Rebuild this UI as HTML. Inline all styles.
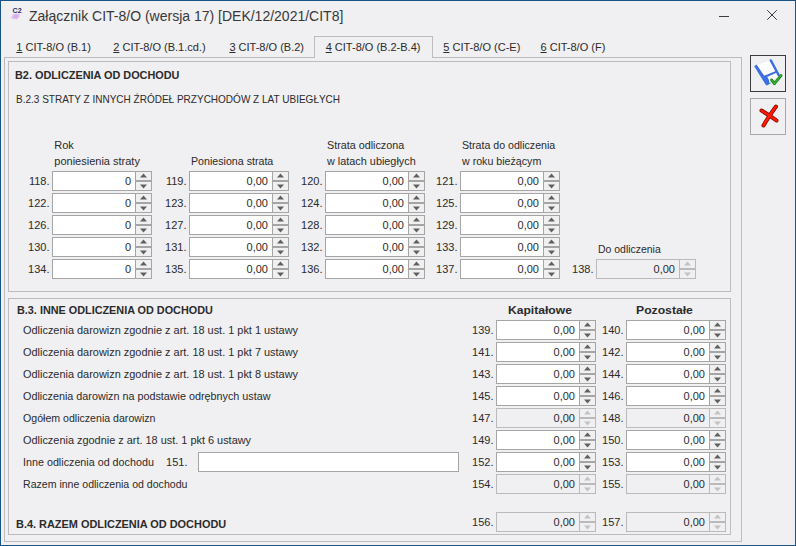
<!DOCTYPE html>
<html><head><meta charset="utf-8"><style>
html,body{margin:0;padding:0;}
body{width:796px;height:546px;position:relative;overflow:hidden;background:#f0eff1;font-family:"Liberation Sans", sans-serif;color:#2b2b2b;}
.t{position:absolute;white-space:pre;}
.r{position:absolute;box-sizing:border-box;}
u{text-decoration:underline;text-underline-offset:1px;}
</style></head><body>

<div class="r" style="left:0;top:0;width:796px;height:546px;border:1px solid #1a5486"></div>
<svg class="r" style="left:0px;top:0px" width="30" height="30" viewBox="0 0 30 30">
<text x="12.6" y="13" font-family="Liberation Sans" font-weight="bold" font-size="6.4" fill="#1e2f72" textLength="9" lengthAdjust="spacingAndGlyphs">C2</text>
<path d="M10.6 17.8 L13.4 13.8 L19.8 13.6 L19.6 16.6 L17.4 19.6 L12.6 19 Z" fill="#e4c8f0"/>
<path d="M12.4 17.6 L14.6 14.6 L18.6 14.4 L18.2 17.2 L16.6 18.6 Z" fill="#d8aee8"/>
</svg>
<div class="t" style="left:29.00px;top:8.35px;font-size:14px;line-height:16.8px;color:#383838;">Załącznik CIT-8/O (wersja 17) [DEK/12/2021/CIT8]</div>
<div class="r" style="left:719px;top:16px;width:10px;height:1px;background:#3c3c3c"></div>
<svg class="r" style="left:766px;top:9px" width="12" height="12"><path d="M1.2 1.2 L10.8 10.8 M10.8 1.2 L1.2 10.8" stroke="#3c3c3c" stroke-width="1"/></svg>
<div class="r" style="left:4px;top:57px;width:738px;height:485px;border:1px solid #bcbcbc;background:transparent;"></div>
<div class="r" style="left:314px;top:36px;width:119px;height:22px;border:1px solid #bcbcbc;border-bottom:none;background:#f0eff1"></div>
<div class="t" style="left:16.30px;top:40.59px;font-size:11px;line-height:13.2px;"><u>1</u> CIT-8/O (B.1)</div>
<div class="t" style="left:113.30px;top:40.59px;font-size:11px;line-height:13.2px;"><u>2</u> CIT-8/O (B.1.cd.)</div>
<div class="t" style="left:229.40px;top:40.59px;font-size:11px;line-height:13.2px;"><u>3</u> CIT-8/O (B.2)</div>
<div class="t" style="left:325.70px;top:40.59px;font-size:11px;line-height:13.2px;"><u>4</u> CIT-8/O (B.2-B.4)</div>
<div class="t" style="left:443.30px;top:40.59px;font-size:11px;line-height:13.2px;"><u>5</u> CIT-8/O (C-E)</div>
<div class="t" style="left:540.50px;top:40.59px;font-size:11px;line-height:13.2px;"><u>6</u> CIT-8/O (F)</div>
<div class="r" style="left:8px;top:61px;width:723px;height:231px;border:1px solid #bcbcbc;background:transparent;"></div>
<div class="r" style="left:8px;top:298px;width:723px;height:237px;border:1px solid #bcbcbc;background:transparent;"></div>
<div class="t" style="left:15.20px;top:69.19px;font-size:11px;line-height:13.2px;font-weight:bold;transform-origin:left center;transform:scaleX(0.988);">B2. ODLICZENIA OD DOCHODU</div>
<div class="t" style="left:16.30px;top:92.99px;font-size:11px;line-height:13.2px;transform-origin:left center;transform:scaleX(0.91);">B.2.3 STRATY Z INNYCH ŹRÓDEŁ PRZYCHODÓW Z LAT UBIEGŁYCH</div>
<div class="t" style="left:54.30px;top:139.19px;font-size:11px;line-height:13.2px;">Rok</div>
<div class="t" style="left:54.30px;top:154.69px;font-size:11px;line-height:13.2px;">poniesienia straty</div>
<div class="t" style="left:191.20px;top:154.69px;font-size:11px;line-height:13.2px;transform-origin:left center;transform:scaleX(0.968);">Poniesiona strata</div>
<div class="t" style="left:327.30px;top:139.19px;font-size:11px;line-height:13.2px;transform-origin:left center;transform:scaleX(0.978);">Strata odliczona</div>
<div class="t" style="left:327.30px;top:154.69px;font-size:11px;line-height:13.2px;transform-origin:left center;transform:scaleX(0.987);">w latach ubiegłych</div>
<div class="t" style="left:462.30px;top:139.19px;font-size:11px;line-height:13.2px;transform-origin:left center;transform:scaleX(0.965);">Strata do odliczenia</div>
<div class="t" style="left:462.30px;top:154.69px;font-size:11px;line-height:13.2px;transform-origin:left center;transform:scaleX(0.968);">w roku bieżącym</div>
<div class="t" style="right:746.50px;top:174.59px;font-size:11px;line-height:13.2px;">118.</div>
<div class="r" style="left:52px;top:171px;width:100px;height:20px;border:1px solid #a5a5a5;background:#ffffff;"></div>
<div class="r" style="left:135px;top:171px;width:17px;height:20px;border:1px solid #a5a5a5;background:#f0f0f0"></div>
<div class="r" style="left:135px;top:180px;width:17px;height:2px;background:#a5a5a5"></div>
<svg class="r" style="left:135px;top:171px" width="17" height="20"><path d="M5.0 6.5 L8.5 2.5 L12.0 6.5Z M5.0 13.5 L8.5 17.5 L12.0 13.5Z" fill="#606060"/></svg>
<div class="t" style="right:665.00px;top:174.59px;font-size:11px;line-height:13.2px;">0</div>
<div class="t" style="right:609.50px;top:174.59px;font-size:11px;line-height:13.2px;">119.</div>
<div class="r" style="left:189px;top:171px;width:100px;height:20px;border:1px solid #a5a5a5;background:#ffffff;"></div>
<div class="r" style="left:272px;top:171px;width:17px;height:20px;border:1px solid #a5a5a5;background:#f0f0f0"></div>
<div class="r" style="left:272px;top:180px;width:17px;height:2px;background:#a5a5a5"></div>
<svg class="r" style="left:272px;top:171px" width="17" height="20"><path d="M5.0 6.5 L8.5 2.5 L12.0 6.5Z M5.0 13.5 L8.5 17.5 L12.0 13.5Z" fill="#606060"/></svg>
<div class="t" style="right:528.00px;top:174.59px;font-size:11px;line-height:13.2px;">0,00</div>
<div class="t" style="right:473.50px;top:174.59px;font-size:11px;line-height:13.2px;">120.</div>
<div class="r" style="left:325px;top:171px;width:100px;height:20px;border:1px solid #a5a5a5;background:#ffffff;"></div>
<div class="r" style="left:408px;top:171px;width:17px;height:20px;border:1px solid #a5a5a5;background:#f0f0f0"></div>
<div class="r" style="left:408px;top:180px;width:17px;height:2px;background:#a5a5a5"></div>
<svg class="r" style="left:408px;top:171px" width="17" height="20"><path d="M5.0 6.5 L8.5 2.5 L12.0 6.5Z M5.0 13.5 L8.5 17.5 L12.0 13.5Z" fill="#606060"/></svg>
<div class="t" style="right:392.00px;top:174.59px;font-size:11px;line-height:13.2px;">0,00</div>
<div class="t" style="right:338.50px;top:174.59px;font-size:11px;line-height:13.2px;">121.</div>
<div class="r" style="left:460px;top:171px;width:100px;height:20px;border:1px solid #a5a5a5;background:#ffffff;"></div>
<div class="r" style="left:543px;top:171px;width:17px;height:20px;border:1px solid #a5a5a5;background:#f0f0f0"></div>
<div class="r" style="left:543px;top:180px;width:17px;height:2px;background:#a5a5a5"></div>
<svg class="r" style="left:543px;top:171px" width="17" height="20"><path d="M5.0 6.5 L8.5 2.5 L12.0 6.5Z M5.0 13.5 L8.5 17.5 L12.0 13.5Z" fill="#606060"/></svg>
<div class="t" style="right:257.00px;top:174.59px;font-size:11px;line-height:13.2px;">0,00</div>
<div class="t" style="right:746.50px;top:196.59px;font-size:11px;line-height:13.2px;">122.</div>
<div class="r" style="left:52px;top:193px;width:100px;height:20px;border:1px solid #a5a5a5;background:#ffffff;"></div>
<div class="r" style="left:135px;top:193px;width:17px;height:20px;border:1px solid #a5a5a5;background:#f0f0f0"></div>
<div class="r" style="left:135px;top:202px;width:17px;height:2px;background:#a5a5a5"></div>
<svg class="r" style="left:135px;top:193px" width="17" height="20"><path d="M5.0 6.5 L8.5 2.5 L12.0 6.5Z M5.0 13.5 L8.5 17.5 L12.0 13.5Z" fill="#606060"/></svg>
<div class="t" style="right:665.00px;top:196.59px;font-size:11px;line-height:13.2px;">0</div>
<div class="t" style="right:609.50px;top:196.59px;font-size:11px;line-height:13.2px;">123.</div>
<div class="r" style="left:189px;top:193px;width:100px;height:20px;border:1px solid #a5a5a5;background:#ffffff;"></div>
<div class="r" style="left:272px;top:193px;width:17px;height:20px;border:1px solid #a5a5a5;background:#f0f0f0"></div>
<div class="r" style="left:272px;top:202px;width:17px;height:2px;background:#a5a5a5"></div>
<svg class="r" style="left:272px;top:193px" width="17" height="20"><path d="M5.0 6.5 L8.5 2.5 L12.0 6.5Z M5.0 13.5 L8.5 17.5 L12.0 13.5Z" fill="#606060"/></svg>
<div class="t" style="right:528.00px;top:196.59px;font-size:11px;line-height:13.2px;">0,00</div>
<div class="t" style="right:473.50px;top:196.59px;font-size:11px;line-height:13.2px;">124.</div>
<div class="r" style="left:325px;top:193px;width:100px;height:20px;border:1px solid #a5a5a5;background:#ffffff;"></div>
<div class="r" style="left:408px;top:193px;width:17px;height:20px;border:1px solid #a5a5a5;background:#f0f0f0"></div>
<div class="r" style="left:408px;top:202px;width:17px;height:2px;background:#a5a5a5"></div>
<svg class="r" style="left:408px;top:193px" width="17" height="20"><path d="M5.0 6.5 L8.5 2.5 L12.0 6.5Z M5.0 13.5 L8.5 17.5 L12.0 13.5Z" fill="#606060"/></svg>
<div class="t" style="right:392.00px;top:196.59px;font-size:11px;line-height:13.2px;">0,00</div>
<div class="t" style="right:338.50px;top:196.59px;font-size:11px;line-height:13.2px;">125.</div>
<div class="r" style="left:460px;top:193px;width:100px;height:20px;border:1px solid #a5a5a5;background:#ffffff;"></div>
<div class="r" style="left:543px;top:193px;width:17px;height:20px;border:1px solid #a5a5a5;background:#f0f0f0"></div>
<div class="r" style="left:543px;top:202px;width:17px;height:2px;background:#a5a5a5"></div>
<svg class="r" style="left:543px;top:193px" width="17" height="20"><path d="M5.0 6.5 L8.5 2.5 L12.0 6.5Z M5.0 13.5 L8.5 17.5 L12.0 13.5Z" fill="#606060"/></svg>
<div class="t" style="right:257.00px;top:196.59px;font-size:11px;line-height:13.2px;">0,00</div>
<div class="t" style="right:746.50px;top:218.59px;font-size:11px;line-height:13.2px;">126.</div>
<div class="r" style="left:52px;top:215px;width:100px;height:20px;border:1px solid #a5a5a5;background:#ffffff;"></div>
<div class="r" style="left:135px;top:215px;width:17px;height:20px;border:1px solid #a5a5a5;background:#f0f0f0"></div>
<div class="r" style="left:135px;top:224px;width:17px;height:2px;background:#a5a5a5"></div>
<svg class="r" style="left:135px;top:215px" width="17" height="20"><path d="M5.0 6.5 L8.5 2.5 L12.0 6.5Z M5.0 13.5 L8.5 17.5 L12.0 13.5Z" fill="#606060"/></svg>
<div class="t" style="right:665.00px;top:218.59px;font-size:11px;line-height:13.2px;">0</div>
<div class="t" style="right:609.50px;top:218.59px;font-size:11px;line-height:13.2px;">127.</div>
<div class="r" style="left:189px;top:215px;width:100px;height:20px;border:1px solid #a5a5a5;background:#ffffff;"></div>
<div class="r" style="left:272px;top:215px;width:17px;height:20px;border:1px solid #a5a5a5;background:#f0f0f0"></div>
<div class="r" style="left:272px;top:224px;width:17px;height:2px;background:#a5a5a5"></div>
<svg class="r" style="left:272px;top:215px" width="17" height="20"><path d="M5.0 6.5 L8.5 2.5 L12.0 6.5Z M5.0 13.5 L8.5 17.5 L12.0 13.5Z" fill="#606060"/></svg>
<div class="t" style="right:528.00px;top:218.59px;font-size:11px;line-height:13.2px;">0,00</div>
<div class="t" style="right:473.50px;top:218.59px;font-size:11px;line-height:13.2px;">128.</div>
<div class="r" style="left:325px;top:215px;width:100px;height:20px;border:1px solid #a5a5a5;background:#ffffff;"></div>
<div class="r" style="left:408px;top:215px;width:17px;height:20px;border:1px solid #a5a5a5;background:#f0f0f0"></div>
<div class="r" style="left:408px;top:224px;width:17px;height:2px;background:#a5a5a5"></div>
<svg class="r" style="left:408px;top:215px" width="17" height="20"><path d="M5.0 6.5 L8.5 2.5 L12.0 6.5Z M5.0 13.5 L8.5 17.5 L12.0 13.5Z" fill="#606060"/></svg>
<div class="t" style="right:392.00px;top:218.59px;font-size:11px;line-height:13.2px;">0,00</div>
<div class="t" style="right:338.50px;top:218.59px;font-size:11px;line-height:13.2px;">129.</div>
<div class="r" style="left:460px;top:215px;width:100px;height:20px;border:1px solid #a5a5a5;background:#ffffff;"></div>
<div class="r" style="left:543px;top:215px;width:17px;height:20px;border:1px solid #a5a5a5;background:#f0f0f0"></div>
<div class="r" style="left:543px;top:224px;width:17px;height:2px;background:#a5a5a5"></div>
<svg class="r" style="left:543px;top:215px" width="17" height="20"><path d="M5.0 6.5 L8.5 2.5 L12.0 6.5Z M5.0 13.5 L8.5 17.5 L12.0 13.5Z" fill="#606060"/></svg>
<div class="t" style="right:257.00px;top:218.59px;font-size:11px;line-height:13.2px;">0,00</div>
<div class="t" style="right:746.50px;top:240.59px;font-size:11px;line-height:13.2px;">130.</div>
<div class="r" style="left:52px;top:237px;width:100px;height:20px;border:1px solid #a5a5a5;background:#ffffff;"></div>
<div class="r" style="left:135px;top:237px;width:17px;height:20px;border:1px solid #a5a5a5;background:#f0f0f0"></div>
<div class="r" style="left:135px;top:246px;width:17px;height:2px;background:#a5a5a5"></div>
<svg class="r" style="left:135px;top:237px" width="17" height="20"><path d="M5.0 6.5 L8.5 2.5 L12.0 6.5Z M5.0 13.5 L8.5 17.5 L12.0 13.5Z" fill="#606060"/></svg>
<div class="t" style="right:665.00px;top:240.59px;font-size:11px;line-height:13.2px;">0</div>
<div class="t" style="right:609.50px;top:240.59px;font-size:11px;line-height:13.2px;">131.</div>
<div class="r" style="left:189px;top:237px;width:100px;height:20px;border:1px solid #a5a5a5;background:#ffffff;"></div>
<div class="r" style="left:272px;top:237px;width:17px;height:20px;border:1px solid #a5a5a5;background:#f0f0f0"></div>
<div class="r" style="left:272px;top:246px;width:17px;height:2px;background:#a5a5a5"></div>
<svg class="r" style="left:272px;top:237px" width="17" height="20"><path d="M5.0 6.5 L8.5 2.5 L12.0 6.5Z M5.0 13.5 L8.5 17.5 L12.0 13.5Z" fill="#606060"/></svg>
<div class="t" style="right:528.00px;top:240.59px;font-size:11px;line-height:13.2px;">0,00</div>
<div class="t" style="right:473.50px;top:240.59px;font-size:11px;line-height:13.2px;">132.</div>
<div class="r" style="left:325px;top:237px;width:100px;height:20px;border:1px solid #a5a5a5;background:#ffffff;"></div>
<div class="r" style="left:408px;top:237px;width:17px;height:20px;border:1px solid #a5a5a5;background:#f0f0f0"></div>
<div class="r" style="left:408px;top:246px;width:17px;height:2px;background:#a5a5a5"></div>
<svg class="r" style="left:408px;top:237px" width="17" height="20"><path d="M5.0 6.5 L8.5 2.5 L12.0 6.5Z M5.0 13.5 L8.5 17.5 L12.0 13.5Z" fill="#606060"/></svg>
<div class="t" style="right:392.00px;top:240.59px;font-size:11px;line-height:13.2px;">0,00</div>
<div class="t" style="right:338.50px;top:240.59px;font-size:11px;line-height:13.2px;">133.</div>
<div class="r" style="left:460px;top:237px;width:100px;height:20px;border:1px solid #a5a5a5;background:#ffffff;"></div>
<div class="r" style="left:543px;top:237px;width:17px;height:20px;border:1px solid #a5a5a5;background:#f0f0f0"></div>
<div class="r" style="left:543px;top:246px;width:17px;height:2px;background:#a5a5a5"></div>
<svg class="r" style="left:543px;top:237px" width="17" height="20"><path d="M5.0 6.5 L8.5 2.5 L12.0 6.5Z M5.0 13.5 L8.5 17.5 L12.0 13.5Z" fill="#606060"/></svg>
<div class="t" style="right:257.00px;top:240.59px;font-size:11px;line-height:13.2px;">0,00</div>
<div class="t" style="right:746.50px;top:262.59px;font-size:11px;line-height:13.2px;">134.</div>
<div class="r" style="left:52px;top:259px;width:100px;height:20px;border:1px solid #a5a5a5;background:#ffffff;"></div>
<div class="r" style="left:135px;top:259px;width:17px;height:20px;border:1px solid #a5a5a5;background:#f0f0f0"></div>
<div class="r" style="left:135px;top:268px;width:17px;height:2px;background:#a5a5a5"></div>
<svg class="r" style="left:135px;top:259px" width="17" height="20"><path d="M5.0 6.5 L8.5 2.5 L12.0 6.5Z M5.0 13.5 L8.5 17.5 L12.0 13.5Z" fill="#606060"/></svg>
<div class="t" style="right:665.00px;top:262.59px;font-size:11px;line-height:13.2px;">0</div>
<div class="t" style="right:609.50px;top:262.59px;font-size:11px;line-height:13.2px;">135.</div>
<div class="r" style="left:189px;top:259px;width:100px;height:20px;border:1px solid #a5a5a5;background:#ffffff;"></div>
<div class="r" style="left:272px;top:259px;width:17px;height:20px;border:1px solid #a5a5a5;background:#f0f0f0"></div>
<div class="r" style="left:272px;top:268px;width:17px;height:2px;background:#a5a5a5"></div>
<svg class="r" style="left:272px;top:259px" width="17" height="20"><path d="M5.0 6.5 L8.5 2.5 L12.0 6.5Z M5.0 13.5 L8.5 17.5 L12.0 13.5Z" fill="#606060"/></svg>
<div class="t" style="right:528.00px;top:262.59px;font-size:11px;line-height:13.2px;">0,00</div>
<div class="t" style="right:473.50px;top:262.59px;font-size:11px;line-height:13.2px;">136.</div>
<div class="r" style="left:325px;top:259px;width:100px;height:20px;border:1px solid #a5a5a5;background:#ffffff;"></div>
<div class="r" style="left:408px;top:259px;width:17px;height:20px;border:1px solid #a5a5a5;background:#f0f0f0"></div>
<div class="r" style="left:408px;top:268px;width:17px;height:2px;background:#a5a5a5"></div>
<svg class="r" style="left:408px;top:259px" width="17" height="20"><path d="M5.0 6.5 L8.5 2.5 L12.0 6.5Z M5.0 13.5 L8.5 17.5 L12.0 13.5Z" fill="#606060"/></svg>
<div class="t" style="right:392.00px;top:262.59px;font-size:11px;line-height:13.2px;">0,00</div>
<div class="t" style="right:338.50px;top:262.59px;font-size:11px;line-height:13.2px;">137.</div>
<div class="r" style="left:460px;top:259px;width:100px;height:20px;border:1px solid #a5a5a5;background:#ffffff;"></div>
<div class="r" style="left:543px;top:259px;width:17px;height:20px;border:1px solid #a5a5a5;background:#f0f0f0"></div>
<div class="r" style="left:543px;top:268px;width:17px;height:2px;background:#a5a5a5"></div>
<svg class="r" style="left:543px;top:259px" width="17" height="20"><path d="M5.0 6.5 L8.5 2.5 L12.0 6.5Z M5.0 13.5 L8.5 17.5 L12.0 13.5Z" fill="#606060"/></svg>
<div class="t" style="right:257.00px;top:262.59px;font-size:11px;line-height:13.2px;">0,00</div>
<div class="t" style="left:597.70px;top:242.89px;font-size:11px;line-height:13.2px;transform-origin:left center;transform:scaleX(0.95);">Do odliczenia</div>
<div class="t" style="right:202.50px;top:262.59px;font-size:11px;line-height:13.2px;">138.</div>
<div class="r" style="left:596px;top:259px;width:100px;height:20px;border:1px solid #bababa;background:#f0eff1;"></div>
<div class="r" style="left:679px;top:259px;width:17px;height:20px;border:1px solid #bababa;background:#f0eff1"></div>
<div class="r" style="left:679px;top:268px;width:17px;height:2px;background:#bababa"></div>
<svg class="r" style="left:679px;top:259px" width="17" height="20"><path d="M5.0 6.5 L8.5 2.5 L12.0 6.5Z M5.0 13.5 L8.5 17.5 L12.0 13.5Z" fill="#c3c3c3"/></svg>
<div class="t" style="right:121.00px;top:262.59px;font-size:11px;line-height:13.2px;">0,00</div>
<div class="t" style="left:16.80px;top:303.99px;font-size:11px;line-height:13.2px;font-weight:bold;transform-origin:left center;transform:scaleX(0.985);">B.3. INNE ODLICZENIA OD DOCHODU</div>
<div class="t" style="left:507.50px;top:303.99px;font-size:11px;line-height:13.2px;font-weight:bold;transform-origin:left center;transform:scaleX(1.1);">Kapitałowe</div>
<div class="t" style="left:635.70px;top:303.99px;font-size:11px;line-height:13.2px;font-weight:bold;transform-origin:left center;transform:scaleX(1.108);">Pozostałe</div>
<div class="t" style="left:23.30px;top:323.59px;font-size:11px;line-height:13.2px;transform-origin:left center;transform:scaleX(0.993);">Odliczenia darowizn zgodnie z art. 18 ust. 1 pkt 1 ustawy</div>
<div class="t" style="right:302.50px;top:323.59px;font-size:11px;line-height:13.2px;">139.</div>
<div class="r" style="left:496px;top:320px;width:100px;height:20px;border:1px solid #a5a5a5;background:#ffffff;"></div>
<div class="r" style="left:579px;top:320px;width:17px;height:20px;border:1px solid #a5a5a5;background:#f0f0f0"></div>
<div class="r" style="left:579px;top:329px;width:17px;height:2px;background:#a5a5a5"></div>
<svg class="r" style="left:579px;top:320px" width="17" height="20"><path d="M5.0 6.5 L8.5 2.5 L12.0 6.5Z M5.0 13.5 L8.5 17.5 L12.0 13.5Z" fill="#606060"/></svg>
<div class="t" style="right:221.00px;top:323.59px;font-size:11px;line-height:13.2px;">0,00</div>
<div class="t" style="right:172.50px;top:323.59px;font-size:11px;line-height:13.2px;">140.</div>
<div class="r" style="left:626px;top:320px;width:100px;height:20px;border:1px solid #a5a5a5;background:#ffffff;"></div>
<div class="r" style="left:709px;top:320px;width:17px;height:20px;border:1px solid #a5a5a5;background:#f0f0f0"></div>
<div class="r" style="left:709px;top:329px;width:17px;height:2px;background:#a5a5a5"></div>
<svg class="r" style="left:709px;top:320px" width="17" height="20"><path d="M5.0 6.5 L8.5 2.5 L12.0 6.5Z M5.0 13.5 L8.5 17.5 L12.0 13.5Z" fill="#606060"/></svg>
<div class="t" style="right:91.00px;top:323.59px;font-size:11px;line-height:13.2px;">0,00</div>
<div class="t" style="left:23.30px;top:345.59px;font-size:11px;line-height:13.2px;transform-origin:left center;transform:scaleX(0.993);">Odliczenia darowizn zgodnie z art. 18 ust. 1 pkt 7 ustawy</div>
<div class="t" style="right:302.50px;top:345.59px;font-size:11px;line-height:13.2px;">141.</div>
<div class="r" style="left:496px;top:342px;width:100px;height:20px;border:1px solid #a5a5a5;background:#ffffff;"></div>
<div class="r" style="left:579px;top:342px;width:17px;height:20px;border:1px solid #a5a5a5;background:#f0f0f0"></div>
<div class="r" style="left:579px;top:351px;width:17px;height:2px;background:#a5a5a5"></div>
<svg class="r" style="left:579px;top:342px" width="17" height="20"><path d="M5.0 6.5 L8.5 2.5 L12.0 6.5Z M5.0 13.5 L8.5 17.5 L12.0 13.5Z" fill="#606060"/></svg>
<div class="t" style="right:221.00px;top:345.59px;font-size:11px;line-height:13.2px;">0,00</div>
<div class="t" style="right:172.50px;top:345.59px;font-size:11px;line-height:13.2px;">142.</div>
<div class="r" style="left:626px;top:342px;width:100px;height:20px;border:1px solid #a5a5a5;background:#ffffff;"></div>
<div class="r" style="left:709px;top:342px;width:17px;height:20px;border:1px solid #a5a5a5;background:#f0f0f0"></div>
<div class="r" style="left:709px;top:351px;width:17px;height:2px;background:#a5a5a5"></div>
<svg class="r" style="left:709px;top:342px" width="17" height="20"><path d="M5.0 6.5 L8.5 2.5 L12.0 6.5Z M5.0 13.5 L8.5 17.5 L12.0 13.5Z" fill="#606060"/></svg>
<div class="t" style="right:91.00px;top:345.59px;font-size:11px;line-height:13.2px;">0,00</div>
<div class="t" style="left:23.30px;top:367.59px;font-size:11px;line-height:13.2px;transform-origin:left center;transform:scaleX(0.993);">Odliczenia darowizn zgodnie z art. 18 ust. 1 pkt 8 ustawy</div>
<div class="t" style="right:302.50px;top:367.59px;font-size:11px;line-height:13.2px;">143.</div>
<div class="r" style="left:496px;top:364px;width:100px;height:20px;border:1px solid #a5a5a5;background:#ffffff;"></div>
<div class="r" style="left:579px;top:364px;width:17px;height:20px;border:1px solid #a5a5a5;background:#f0f0f0"></div>
<div class="r" style="left:579px;top:373px;width:17px;height:2px;background:#a5a5a5"></div>
<svg class="r" style="left:579px;top:364px" width="17" height="20"><path d="M5.0 6.5 L8.5 2.5 L12.0 6.5Z M5.0 13.5 L8.5 17.5 L12.0 13.5Z" fill="#606060"/></svg>
<div class="t" style="right:221.00px;top:367.59px;font-size:11px;line-height:13.2px;">0,00</div>
<div class="t" style="right:172.50px;top:367.59px;font-size:11px;line-height:13.2px;">144.</div>
<div class="r" style="left:626px;top:364px;width:100px;height:20px;border:1px solid #a5a5a5;background:#ffffff;"></div>
<div class="r" style="left:709px;top:364px;width:17px;height:20px;border:1px solid #a5a5a5;background:#f0f0f0"></div>
<div class="r" style="left:709px;top:373px;width:17px;height:2px;background:#a5a5a5"></div>
<svg class="r" style="left:709px;top:364px" width="17" height="20"><path d="M5.0 6.5 L8.5 2.5 L12.0 6.5Z M5.0 13.5 L8.5 17.5 L12.0 13.5Z" fill="#606060"/></svg>
<div class="t" style="right:91.00px;top:367.59px;font-size:11px;line-height:13.2px;">0,00</div>
<div class="t" style="left:23.30px;top:389.59px;font-size:11px;line-height:13.2px;transform-origin:left center;transform:scaleX(0.98);">Odliczenia darowizn na podstawie odrębnych ustaw</div>
<div class="t" style="right:302.50px;top:389.59px;font-size:11px;line-height:13.2px;">145.</div>
<div class="r" style="left:496px;top:386px;width:100px;height:20px;border:1px solid #a5a5a5;background:#ffffff;"></div>
<div class="r" style="left:579px;top:386px;width:17px;height:20px;border:1px solid #a5a5a5;background:#f0f0f0"></div>
<div class="r" style="left:579px;top:395px;width:17px;height:2px;background:#a5a5a5"></div>
<svg class="r" style="left:579px;top:386px" width="17" height="20"><path d="M5.0 6.5 L8.5 2.5 L12.0 6.5Z M5.0 13.5 L8.5 17.5 L12.0 13.5Z" fill="#606060"/></svg>
<div class="t" style="right:221.00px;top:389.59px;font-size:11px;line-height:13.2px;">0,00</div>
<div class="t" style="right:172.50px;top:389.59px;font-size:11px;line-height:13.2px;">146.</div>
<div class="r" style="left:626px;top:386px;width:100px;height:20px;border:1px solid #a5a5a5;background:#ffffff;"></div>
<div class="r" style="left:709px;top:386px;width:17px;height:20px;border:1px solid #a5a5a5;background:#f0f0f0"></div>
<div class="r" style="left:709px;top:395px;width:17px;height:2px;background:#a5a5a5"></div>
<svg class="r" style="left:709px;top:386px" width="17" height="20"><path d="M5.0 6.5 L8.5 2.5 L12.0 6.5Z M5.0 13.5 L8.5 17.5 L12.0 13.5Z" fill="#606060"/></svg>
<div class="t" style="right:91.00px;top:389.59px;font-size:11px;line-height:13.2px;">0,00</div>
<div class="t" style="left:23.30px;top:411.59px;font-size:11px;line-height:13.2px;transform-origin:left center;transform:scaleX(0.963);">Ogółem odliczenia darowizn</div>
<div class="t" style="right:302.50px;top:411.59px;font-size:11px;line-height:13.2px;">147.</div>
<div class="r" style="left:496px;top:408px;width:100px;height:20px;border:1px solid #bababa;background:#f0eff1;"></div>
<div class="r" style="left:579px;top:408px;width:17px;height:20px;border:1px solid #bababa;background:#f0eff1"></div>
<div class="r" style="left:579px;top:417px;width:17px;height:2px;background:#bababa"></div>
<svg class="r" style="left:579px;top:408px" width="17" height="20"><path d="M5.0 6.5 L8.5 2.5 L12.0 6.5Z M5.0 13.5 L8.5 17.5 L12.0 13.5Z" fill="#c3c3c3"/></svg>
<div class="t" style="right:221.00px;top:411.59px;font-size:11px;line-height:13.2px;">0,00</div>
<div class="t" style="right:172.50px;top:411.59px;font-size:11px;line-height:13.2px;">148.</div>
<div class="r" style="left:626px;top:408px;width:100px;height:20px;border:1px solid #bababa;background:#f0eff1;"></div>
<div class="r" style="left:709px;top:408px;width:17px;height:20px;border:1px solid #bababa;background:#f0eff1"></div>
<div class="r" style="left:709px;top:417px;width:17px;height:2px;background:#bababa"></div>
<svg class="r" style="left:709px;top:408px" width="17" height="20"><path d="M5.0 6.5 L8.5 2.5 L12.0 6.5Z M5.0 13.5 L8.5 17.5 L12.0 13.5Z" fill="#c3c3c3"/></svg>
<div class="t" style="right:91.00px;top:411.59px;font-size:11px;line-height:13.2px;">0,00</div>
<div class="t" style="left:23.30px;top:433.59px;font-size:11px;line-height:13.2px;transform-origin:left center;transform:scaleX(0.992);">Odliczenia zgodnie z art. 18 ust. 1 pkt 6 ustawy</div>
<div class="t" style="right:302.50px;top:433.59px;font-size:11px;line-height:13.2px;">149.</div>
<div class="r" style="left:496px;top:430px;width:100px;height:20px;border:1px solid #a5a5a5;background:#ffffff;"></div>
<div class="r" style="left:579px;top:430px;width:17px;height:20px;border:1px solid #a5a5a5;background:#f0f0f0"></div>
<div class="r" style="left:579px;top:439px;width:17px;height:2px;background:#a5a5a5"></div>
<svg class="r" style="left:579px;top:430px" width="17" height="20"><path d="M5.0 6.5 L8.5 2.5 L12.0 6.5Z M5.0 13.5 L8.5 17.5 L12.0 13.5Z" fill="#606060"/></svg>
<div class="t" style="right:221.00px;top:433.59px;font-size:11px;line-height:13.2px;">0,00</div>
<div class="t" style="right:172.50px;top:433.59px;font-size:11px;line-height:13.2px;">150.</div>
<div class="r" style="left:626px;top:430px;width:100px;height:20px;border:1px solid #a5a5a5;background:#ffffff;"></div>
<div class="r" style="left:709px;top:430px;width:17px;height:20px;border:1px solid #a5a5a5;background:#f0f0f0"></div>
<div class="r" style="left:709px;top:439px;width:17px;height:2px;background:#a5a5a5"></div>
<svg class="r" style="left:709px;top:430px" width="17" height="20"><path d="M5.0 6.5 L8.5 2.5 L12.0 6.5Z M5.0 13.5 L8.5 17.5 L12.0 13.5Z" fill="#606060"/></svg>
<div class="t" style="right:91.00px;top:433.59px;font-size:11px;line-height:13.2px;">0,00</div>
<div class="t" style="left:23.30px;top:455.59px;font-size:11px;line-height:13.2px;transform-origin:left center;transform:scaleX(0.977);">Inne odliczenia od dochodu</div>
<div class="t" style="right:302.50px;top:455.59px;font-size:11px;line-height:13.2px;">152.</div>
<div class="r" style="left:496px;top:452px;width:100px;height:20px;border:1px solid #a5a5a5;background:#ffffff;"></div>
<div class="r" style="left:579px;top:452px;width:17px;height:20px;border:1px solid #a5a5a5;background:#f0f0f0"></div>
<div class="r" style="left:579px;top:461px;width:17px;height:2px;background:#a5a5a5"></div>
<svg class="r" style="left:579px;top:452px" width="17" height="20"><path d="M5.0 6.5 L8.5 2.5 L12.0 6.5Z M5.0 13.5 L8.5 17.5 L12.0 13.5Z" fill="#606060"/></svg>
<div class="t" style="right:221.00px;top:455.59px;font-size:11px;line-height:13.2px;">0,00</div>
<div class="t" style="right:172.50px;top:455.59px;font-size:11px;line-height:13.2px;">153.</div>
<div class="r" style="left:626px;top:452px;width:100px;height:20px;border:1px solid #a5a5a5;background:#ffffff;"></div>
<div class="r" style="left:709px;top:452px;width:17px;height:20px;border:1px solid #a5a5a5;background:#f0f0f0"></div>
<div class="r" style="left:709px;top:461px;width:17px;height:2px;background:#a5a5a5"></div>
<svg class="r" style="left:709px;top:452px" width="17" height="20"><path d="M5.0 6.5 L8.5 2.5 L12.0 6.5Z M5.0 13.5 L8.5 17.5 L12.0 13.5Z" fill="#606060"/></svg>
<div class="t" style="right:91.00px;top:455.59px;font-size:11px;line-height:13.2px;">0,00</div>
<div class="t" style="left:23.30px;top:477.59px;font-size:11px;line-height:13.2px;transform-origin:left center;transform:scaleX(0.96);">Razem inne odliczenia od dochodu</div>
<div class="t" style="right:302.50px;top:477.59px;font-size:11px;line-height:13.2px;">154.</div>
<div class="r" style="left:496px;top:474px;width:100px;height:20px;border:1px solid #bababa;background:#f0eff1;"></div>
<div class="r" style="left:579px;top:474px;width:17px;height:20px;border:1px solid #bababa;background:#f0eff1"></div>
<div class="r" style="left:579px;top:483px;width:17px;height:2px;background:#bababa"></div>
<svg class="r" style="left:579px;top:474px" width="17" height="20"><path d="M5.0 6.5 L8.5 2.5 L12.0 6.5Z M5.0 13.5 L8.5 17.5 L12.0 13.5Z" fill="#c3c3c3"/></svg>
<div class="t" style="right:221.00px;top:477.59px;font-size:11px;line-height:13.2px;">0,00</div>
<div class="t" style="right:172.50px;top:477.59px;font-size:11px;line-height:13.2px;">155.</div>
<div class="r" style="left:626px;top:474px;width:100px;height:20px;border:1px solid #bababa;background:#f0eff1;"></div>
<div class="r" style="left:709px;top:474px;width:17px;height:20px;border:1px solid #bababa;background:#f0eff1"></div>
<div class="r" style="left:709px;top:483px;width:17px;height:2px;background:#bababa"></div>
<svg class="r" style="left:709px;top:474px" width="17" height="20"><path d="M5.0 6.5 L8.5 2.5 L12.0 6.5Z M5.0 13.5 L8.5 17.5 L12.0 13.5Z" fill="#c3c3c3"/></svg>
<div class="t" style="right:91.00px;top:477.59px;font-size:11px;line-height:13.2px;">0,00</div>
<div class="t" style="right:608.50px;top:455.59px;font-size:11px;line-height:13.2px;">151.</div>
<div class="r" style="left:198px;top:452px;width:261px;height:20px;border:1px solid #a5a5a5;background:#ffffff;"></div>
<div class="t" style="left:16.20px;top:517.99px;font-size:11px;line-height:13.2px;font-weight:bold;transform-origin:left center;transform:scaleX(0.993);">B.4. RAZEM ODLICZENIA OD DOCHODU</div>
<div class="t" style="right:302.50px;top:515.59px;font-size:11px;line-height:13.2px;">156.</div>
<div class="r" style="left:496px;top:512px;width:100px;height:20px;border:1px solid #bababa;background:#f0eff1;"></div>
<div class="r" style="left:579px;top:512px;width:17px;height:20px;border:1px solid #bababa;background:#f0eff1"></div>
<div class="r" style="left:579px;top:521px;width:17px;height:2px;background:#bababa"></div>
<svg class="r" style="left:579px;top:512px" width="17" height="20"><path d="M5.0 6.5 L8.5 2.5 L12.0 6.5Z M5.0 13.5 L8.5 17.5 L12.0 13.5Z" fill="#c3c3c3"/></svg>
<div class="t" style="right:221.00px;top:515.59px;font-size:11px;line-height:13.2px;">0,00</div>
<div class="t" style="right:172.50px;top:515.59px;font-size:11px;line-height:13.2px;">157.</div>
<div class="r" style="left:626px;top:512px;width:100px;height:20px;border:1px solid #bababa;background:#f0eff1;"></div>
<div class="r" style="left:709px;top:512px;width:17px;height:20px;border:1px solid #bababa;background:#f0eff1"></div>
<div class="r" style="left:709px;top:521px;width:17px;height:2px;background:#bababa"></div>
<svg class="r" style="left:709px;top:512px" width="17" height="20"><path d="M5.0 6.5 L8.5 2.5 L12.0 6.5Z M5.0 13.5 L8.5 17.5 L12.0 13.5Z" fill="#c3c3c3"/></svg>
<div class="t" style="right:91.00px;top:515.59px;font-size:11px;line-height:13.2px;">0,00</div>
<div class="r" style="left:750px;top:55px;width:36px;height:37px;border:1px solid #3c3c3c"></div>
<svg class="r" style="left:750px;top:55px" width="36" height="37" viewBox="0 0 36 37">
<path d="M5.5 10.5 L20.8 5.2 L28.8 20.3 L16.5 30 Z" fill="#ffffff"/>
<path d="M4.2 11.2 L6.6 9.4 L18.8 27.6 L16.2 30.4 Z" fill="#3b6fe4"/>
<path d="M12.8 21.8 L16.2 20.2 L21 28 L17 30.6 Z" fill="#3b6fe4"/>
<path d="M20.8 5.4 L28.6 20" stroke="#3b6fe4" stroke-width="2.4" stroke-linecap="round"/>
<path d="M14.2 22 L26.2 16.8" stroke="#3b6fe4" stroke-width="2"/>
<path d="M18.4 22.6 L21.6 21.4 L23 26.6 L19.6 28 Z" fill="#ffffff"/>
<path d="M21.6 25 L24.4 28.6 L31 20.6" stroke="#157d15" stroke-width="2.9" fill="none" stroke-linecap="round" stroke-linejoin="round"/>
<path d="M21.6 25 L24.4 28.6 L31 20.6" stroke="#36c036" stroke-width="1.2" fill="none" stroke-linecap="round" stroke-linejoin="round"/>
</svg>
<div class="r" style="left:750px;top:98px;width:36px;height:37px;border:1px solid #a8a8a8"></div>
<svg class="r" style="left:750px;top:98px" width="36" height="37" viewBox="0 0 36 37">
<path d="M11.5 12.5 Q19 17 26.5 22.5 M26 8.5 Q19.5 17 13.5 27.5" stroke="#7a0000" stroke-width="4" stroke-linecap="round" fill="none"/>
<path d="M11.5 12.5 Q19 17 26.5 22.5 M26 8.5 Q19.5 17 13.5 27.5" stroke="#ff1a00" stroke-width="2.6" stroke-linecap="round" fill="none"/>
</svg>
</body></html>
